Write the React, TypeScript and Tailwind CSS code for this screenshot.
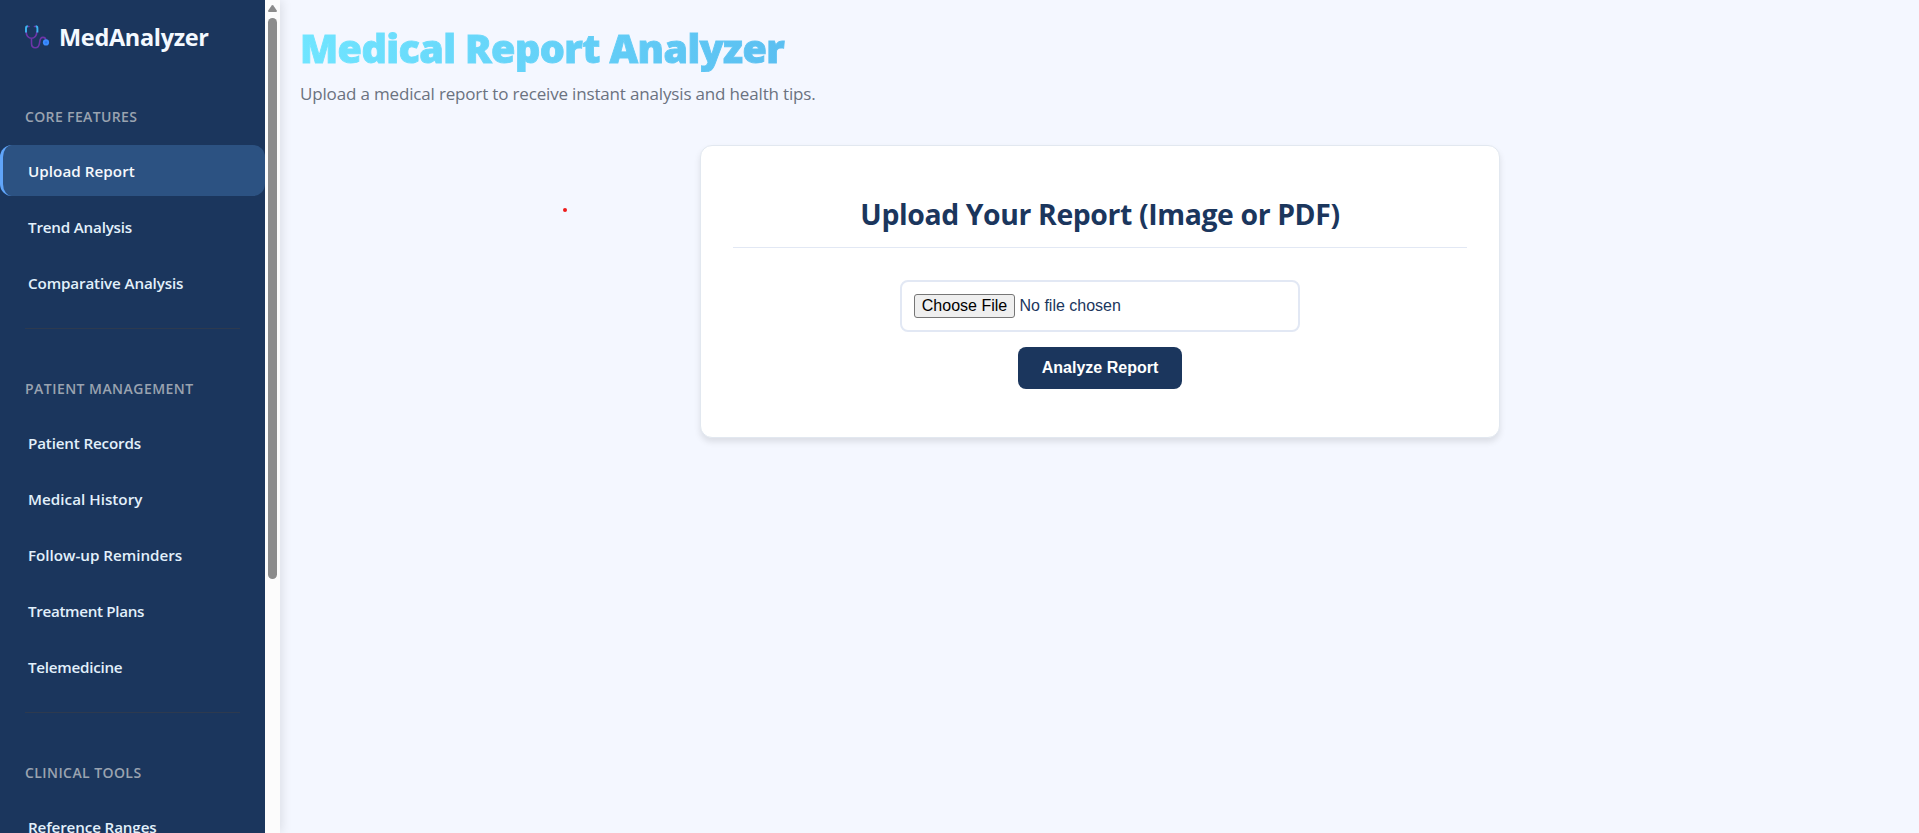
type NavItem = { label: string; tracking: string; active?: boolean };
type NavSection = { title: string; tracking: string; items: NavItem[] };

const sections: NavSection[] = [
  {
    title: "CORE FEATURES",
    tracking: "tracking-[0.36px]",
    items: [
      { label: "Upload Report", tracking: "tracking-[0.05px]", active: true },
      { label: "Trend Analysis", tracking: "tracking-[-0.2px]" },
      { label: "Comparative Analysis", tracking: "tracking-[-0.13px]" },
    ],
  },
  {
    title: "PATIENT MANAGEMENT",
    tracking: "tracking-[0.46px]",
    items: [
      { label: "Patient Records", tracking: "tracking-[-0.16px]" },
      { label: "Medical History", tracking: "tracking-[0.03px]" },
      { label: "Follow-up Reminders", tracking: "tracking-[-0.01px]" },
      { label: "Treatment Plans", tracking: "tracking-[-0.33px]" },
      { label: "Telemedicine", tracking: "tracking-[-0.26px]" },
    ],
  },
  {
    title: "CLINICAL TOOLS",
    tracking: "tracking-[0.42px]",
    items: [{ label: "Reference Ranges", tracking: "tracking-[-0.13px]" }],
  },
];

function StethoscopeIcon() {
  return (
    <svg viewBox="0 0 26 26" className="h-[26px] w-[26px] shrink-0" fill="none" strokeLinecap="round">
      <path
        d="M2.2 8C2.2 11.5 4.5 14.3 7.5 14.3S12.8 11.5 12.8 8M7.5 14.3V19.2C7.5 22 9 23.8 11.3 23.8C14 23.8 15.2 21.8 15.6 18.6C15.9 15.3 16.8 13.4 19 13.4C21 13.4 21.9 14.8 21.9 17"
        stroke="#6d35a8"
        strokeWidth="1.6"
      />
      <path d="M4 2.4H5M10.4 2.4H11.4" stroke="#6d35a8" strokeWidth="1.5" />
      <path
        d="M3.8 2.3C2.6 2.3 2 3 2 4.2V8.6M11.7 2.3C12.9 2.3 13.4 3 13.4 4.2V8.6"
        stroke="#3db4f2"
        strokeWidth="1.9"
        strokeLinecap="butt"
      />
      <circle cx="22" cy="18.4" r="3.1" fill="#3b8cff" />
      <circle cx="22" cy="18.4" r="1.2" fill="#2f79f0" />
    </svg>
  );
}

function Sidebar() {
  return (
    <aside className="z-10 flex h-[833px] w-[280px] shrink-0 overflow-hidden bg-[#1b365d] shadow-[2px_0_10px_rgba(0,0,0,0.1)]">
      <nav className="w-[265px]">
        <div className="flex h-[55px] items-start gap-[9px] pl-6 pt-[19px]">
          <div className="pt-[5px]">
            <StethoscopeIcon />
          </div>
          <span className="text-[23.5px] font-bold leading-9 tracking-[-0.33px] text-[#f4f9ff]">MedAnalyzer</span>
        </div>
        {sections.map((section, i) => (
          <section key={section.title}>
            {i > 0 && <hr className="ml-[25px] mt-5 w-[215px] border-t border-[#2d3a4f]" />}
            <h3
              className={`${i > 0 ? "mt-[50px]" : "mt-[52px]"} mb-[18px] pl-[25px] text-[14px] font-semibold leading-5 text-[#9aa3b0] ${section.tracking}`}
            >
              {section.title}
            </h3>
            <ul className="flex flex-col gap-[5px]">
              {section.items.map((item) => (
                <li
                  key={item.label}
                  className={`flex h-[51px] items-center rounded-xl border-l-[3px] pl-[25px] pt-[2px] text-[15.2px] font-semibold ${item.tracking} ${
                    item.active ? "border-[#60a5fa] bg-[#2c5282] text-[#f5f8fc]" : "border-transparent text-[#e2f0fb]"
                  }`}
                >
                  {item.label}
                </li>
              ))}
            </ul>
          </section>
        ))}
      </nav>
      <div className="flex w-[15px] flex-col items-center bg-[#fcfcfc] pt-[5px]">
        <svg viewBox="0 0 9 7" className="h-[7px] w-[9px] shrink-0" fill="#8b8b8b">
          <path d="M3.7.5Q4.5-.4 5.3.5L8.8 5.6Q9.2 7 8 7H1Q-.2 7 .2 5.6Z" />
        </svg>
        <div className="mt-[6px] h-[561px] w-[9px] shrink-0 rounded-full bg-[#8b8b8b]" />
      </div>
    </aside>
  );
}

export default function App() {
  return (
    <div className="relative flex h-[833px] w-full overflow-hidden bg-[#f4f7ff] font-['Open_Sans','Noto_Sans',sans-serif]">
      <Sidebar />
      <main className="flex-1 pl-5 pr-[19px] pt-6">
        <h1 className="w-[485px] whitespace-nowrap bg-linear-to-r from-[#70e5ff] to-[#5bbff1] bg-clip-text text-[39.5px] font-black leading-[48px] tracking-[-0.6px] text-transparent [-webkit-text-stroke:0.9px_transparent]">
          Medical Report Analyzer
        </h1>
        <p className="mt-2 whitespace-nowrap text-[17px] font-normal leading-7 tracking-[-0.165px] text-[#6b7280]">
          Upload a medical report to receive instant analysis and health tips.
        </p>
        <section className="mx-auto mt-[37px] flex w-[800px] flex-col items-center rounded-xl border border-[#e2e8f0] bg-white px-8 py-12 shadow-[0_4px_6px_rgba(0,0,0,0.1)]">
          <h2 className="w-full whitespace-nowrap border-b border-[#e2e8f4] pb-[13px] text-center text-[28.4px] font-bold leading-10 tracking-[-0.39px] text-[#1b365d]">
            Upload Your Report (Image or PDF)
          </h2>
          <label className="mt-8 flex h-[52px] w-[400px] items-center gap-[4.5px] rounded-lg border-2 border-[#e2e8f4] px-3 pb-[2px] pt-[2px] font-['Liberation_Sans',Arial,sans-serif] text-base text-[#1b365d]">
            <input type="file" className="hidden" />
            <span className="flex h-6 w-[101px] items-center justify-center whitespace-nowrap rounded-[3px] border border-[#767676] bg-[#efefef] pb-px leading-none text-black">
              Choose File
            </span>
            <span className="leading-6">No file chosen</span>
          </label>
          <button className="mt-[15px] h-[42px] w-[164px] rounded-lg bg-[#1b365d] pb-px font-['Liberation_Sans',Arial,sans-serif] text-base font-bold text-white">
            Analyze Report
          </button>
        </section>
      </main>
      <span className="absolute left-[562.5px] top-[208px] h-1 w-1 rounded-full bg-[#ee1c1c]" />
    </div>
  );
}
